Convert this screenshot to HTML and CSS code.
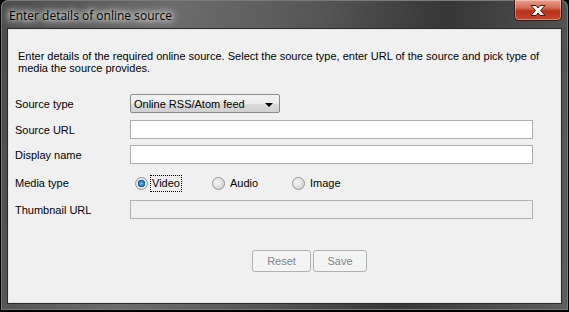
FILE: index.html
```html
<!DOCTYPE html>
<html lang="en">

<head>
    <meta charset="UTF-8">
    <link rel="stylesheet" href="styles.css">
    <title>Enter details of online source</title>
</head>

<body>
    <div class="window">
        <div class="title-bar">
            <span class="title">Enter details of online source</span>
            <span class="close-btn">
                <svg width="20" height="13" viewBox="0 0 20 13">
                    <path d="M3 1.5 L8 1.5 L10 4 L12 1.5 L17 1.5 L12.5 6.5 L17 11.5 L12 11.5 L10 9 L8 11.5 L3 11.5 L7.5 6.5 Z" fill="#fff" stroke="#4a1810" stroke-width="1"/>
                </svg>
            </span>
        </div>
        <div class="content">
            <p class="intro">Enter details of the required online source. Select the source type, enter URL of the source and pick type of media the source provides.</p>
            <div class="form-grid">
                <label>Source type</label>
                <div class="select">
                    <span>Online RSS/Atom feed</span>
                    <span class="arrow"></span>
                </div>

                <label>Source URL</label>
                <div class="text-input"></div>

                <label>Display name</label>
                <div class="text-input"></div>

                <label>Media type</label>
                <div class="radio-row">
                    <div class="option">
                        <span class="radio checked"></span>
                        <span class="radio-label focused">Video</span>
                    </div>
                    <div class="option">
                        <span class="radio"></span>
                        <span class="radio-label">Audio</span>
                    </div>
                    <div class="option">
                        <span class="radio"></span>
                        <span class="radio-label">Image</span>
                    </div>
                </div>

                <label>Thumbnail URL</label>
                <div class="text-input disabled"></div>
            </div>
            <div class="btn-container">
                <span class="btn btn-reset">Reset</span>
                <span class="btn btn-save">Save</span>
            </div>
        </div>
    </div>
</body>

</html>
```

FILE: styles.css
```css
body {
    margin: 0;
    background-color: #000;
    font-family: 'Liberation Sans', Arial, sans-serif;
    font-size: 11px;
    color: #000;
}

.window {
    width: 567px;
    height: 310px;
    margin: 0 1px;
    border-radius: 7px 7px 0 0;
    background: linear-gradient(100deg, #4a4a4a 0%, #6c6c6c 28%, #555 52%, #363636 72%, #5e5e5e 100%);
    box-shadow: inset 0 0 0 1px #7a7a7a;
    display: flex;
    flex-direction: column;
}

.title-bar {
    height: 29px;
    display: flex;
    justify-content: space-between;
    align-items: flex-start;
}

.title {
    margin: 9px 0 0 8px;
    font-family: 'Open Sans', 'Liberation Sans', sans-serif;
    font-size: 12px;
    line-height: 14px;
    color: #000;
    text-shadow: 0 0 5px #fff, 0 0 8px #fff, 0 0 12px #eee;
}

.close-btn {
    width: 46px;
    height: 20px;
    margin-right: 6px;
    border: 1px solid #3a1a14;
    border-top: none;
    border-radius: 0 0 5px 5px;
    background: linear-gradient(#e8a08e 0%, #d36a53 40%, #b8321a 55%, #c8462c 100%);
    box-shadow: inset 0 0 0 1px rgba(255, 255, 255, 0.35);
    display: flex;
    justify-content: center;
    align-items: center;
}

.content {
    flex: 1;
    margin: 0 7px 7px 7px;
    background-color: #f0f0f0;
    border: 1px solid #e4e4e4;
    outline: 1px solid #2a2a2a;
    padding: 0 8px;
}

.intro {
    margin: 20px 0 0 1px;
    line-height: 12px;
    width: 540px;
}

.form-grid {
    display: grid;
    grid-template-columns: 115px 403px;
    grid-template-rows: 19px 20px 19px 24px 19px;
    row-gap: 6px;
    align-items: center;
    margin-top: 20px;
    margin-left: -2px;
}

.form-grid label {
    line-height: 13px;
    padding-top: 2px;
}

.select {
    height: 17px;
    border: 1px solid #8a8a8a;
    border-radius: 2px;
    background: linear-gradient(#f4f4f4 0%, #ebebeb 50%, #dcdcdc 51%, #d0d0d0 100%);
    display: flex;
    align-items: center;
    justify-content: space-between;
    padding: 0 6px 0 3px;
    width: 139px;
}

.arrow {
    width: 0;
    height: 0;
    border-left: 4px solid transparent;
    border-right: 4px solid transparent;
    border-top: 4px solid #000;
    margin-top: 2px;
}

.text-input {
    height: 17px;
    border: 1px solid #abadb3;
    background-color: #fff;
}

.text-input.disabled {
    background-color: #f0f0f0;
    border-color: #adb2b5;
}

.radio-row {
    display: grid;
    grid-template-columns: 77px 80px auto;
    align-items: center;
    padding-left: 5px;
    padding-top: 2px;
}

.option {
    display: flex;
    align-items: center;
}

.radio {
    width: 11px;
    height: 11px;
    border: 1px solid #929292;
    border-radius: 50%;
    background: radial-gradient(circle at 40% 35%, #f6f6f6 0%, #dcdcdc 60%, #c8c8c8 100%);
    margin-right: 3px;
}

.radio.checked {
    background: radial-gradient(circle, #7ec8f4 0%, #1c6fb0 35%, #15507e 45%, #e4e4e4 50%, #f2f2f2 100%);
}

.radio-label {
    padding: 1px;
    line-height: 13px;
    margin-left: 1px;
}

.radio-label.focused {
    outline: 1px dotted #000;
    margin-left: 0;
}

.btn-container {
    display: flex;
    gap: 2px;
    margin-top: 31px;
    margin-left: 235px;
}

.btn {
    height: 20px;
    border: 1px solid #adb2b5;
    border-radius: 3px;
    background-color: #f4f4f4;
    color: #838383;
    display: flex;
    justify-content: center;
    align-items: center;
}

.btn-reset {
    width: 57px;
}

.btn-save {
    width: 52px;
}
```
